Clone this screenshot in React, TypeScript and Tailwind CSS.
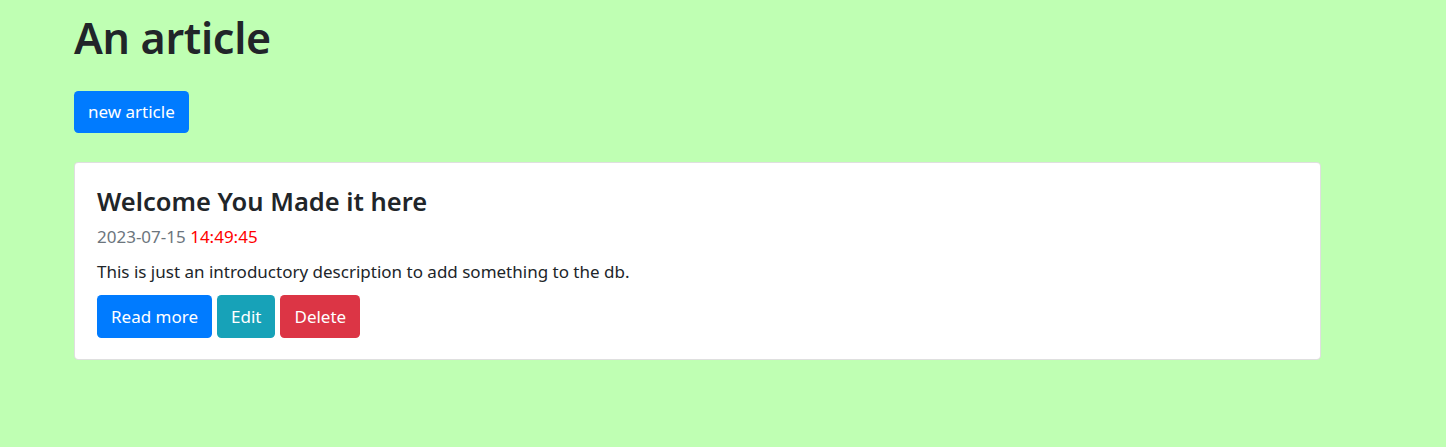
export default function App() {
  return (
    <div
      className="min-h-screen bg-[#bfffb3] pl-[74px] pt-[11px] text-[#212529]"
      style={{ fontFamily: '"Noto Sans", "Open Sans", sans-serif', minHeight: 447 }}
    >
      <h1 className="text-[43px] leading-[53px] font-semibold tracking-[-0.3px]">An article</h1>
      <div className="mt-[27px]">
        <button className="h-[42px] px-[14px] rounded-[4.4px] bg-[#007bff] text-white text-[17px] leading-[26px]">
          new article
        </button>
      </div>
      <div className="mt-[29px] w-[1247px] h-[198px] bg-white border border-black/[.125] rounded-[4.4px] px-[22px] pt-[22px]">
        <h4 className="text-[25.5px] leading-[32px] font-semibold">Welcome You Made it here</h4>
        <div className="mt-[7px] text-[17px] leading-[26px] text-[#6c757d]">
          2023-07-15 <span className="text-[#ff0000]">14:49:45</span>
        </div>
        <p className="mt-[9px] text-[17px] leading-[26px]">
          This is just an introductory description to add something to the db.
        </p>
        <div className="mt-[10px] flex gap-[5px]">
          <button className="h-[43px] px-[14px] rounded-[4.4px] bg-[#007bff] text-white text-[17px]">Read more</button>
          <button className="h-[43px] px-[14px] rounded-[4.4px] bg-[#17a2b8] text-white text-[17px]">Edit</button>
          <button className="h-[43px] px-[14px] rounded-[4.4px] bg-[#dc3545] text-white text-[17px]">Delete</button>
        </div>
      </div>
    </div>
  );
}
